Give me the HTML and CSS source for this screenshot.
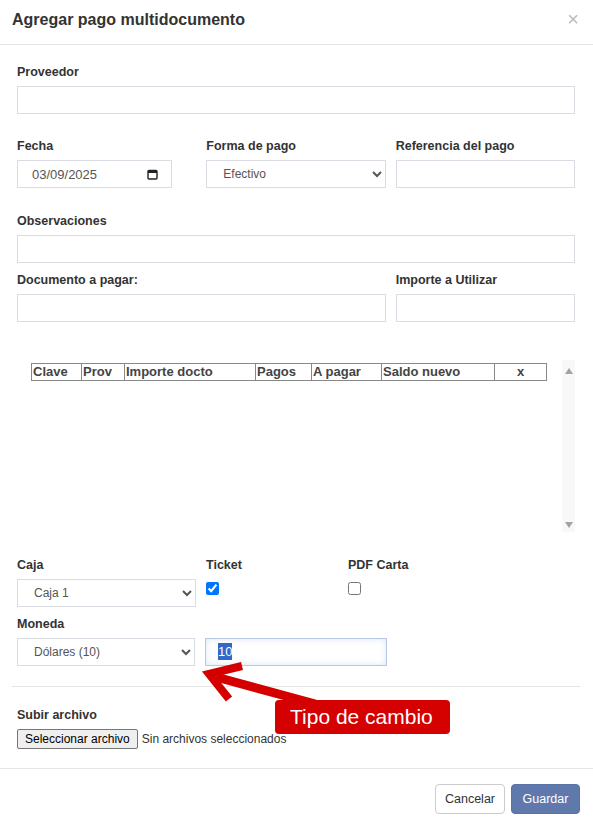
FILE: index.html
```html
<!DOCTYPE html>
<html lang="es">
<head>
    <meta charset="UTF-8">
    <meta name="viewport" content="width=device-width, initial-scale=1.0">
    <title>Agregar pago multidocumento</title>
    <link rel="stylesheet" href="styles.css">
</head>
<body>
    <div class="modal">
        <div class="modal-header">
            <h4>Agregar pago multidocumento</h4>
            <span class="cerrar">&times;</span>
        </div>

        <div class="modal-body">
            <div class="campo">
                <label>Proveedor</label>
                <input type="text" class="control">
            </div>

            <div class="fila fila-fecha">
                <div class="campo">
                    <label>Fecha</label>
                    <div class="fecha">
                        <input type="text" class="control" value="03/09/2025">
                        <svg class="icono-cal" width="11" height="11" viewBox="0 0 11 11">
                            <rect x="1" y="1.5" width="9" height="8.5" rx="1" fill="none" stroke="#222" stroke-width="1.4"/>
                            <rect x="1" y="1.5" width="9" height="2.5" fill="#222"/>
                        </svg>
                    </div>
                </div>
                <div class="campo">
                    <label>Forma de pago</label>
                    <select class="control">
                        <option>Efectivo</option>
                    </select>
                </div>
                <div class="campo">
                    <label>Referencia del pago</label>
                    <input type="text" class="control">
                </div>
            </div>

            <div class="campo obs">
                <label>Observaciones</label>
                <input type="text" class="control">
            </div>

            <div class="fila fila-doc">
                <div class="campo doble">
                    <label>Documento a pagar:</label>
                    <input type="text" class="control">
                </div>
                <div class="campo">
                    <label>Importe a Utilizar</label>
                    <input type="text" class="control">
                </div>
            </div>

            <div class="tabla-wrap">
                <div class="tabla-scroll">
                    <table class="tabla">
                        <thead>
                            <tr>
                                <th class="c-clave">Clave</th>
                                <th class="c-prov">Prov</th>
                                <th class="c-importe">Importe docto</th>
                                <th class="c-pagos">Pagos</th>
                                <th class="c-apagar">A pagar</th>
                                <th class="c-saldo">Saldo nuevo</th>
                                <th class="c-x">x</th>
                            </tr>
                        </thead>
                    </table>
                </div>
                <div class="scrollbar">
                    <span class="flecha arriba"></span>
                    <span class="flecha abajo"></span>
                </div>
            </div>

            <div class="fila fila-caja">
                <div class="campo">
                    <label>Caja</label>
                    <select class="control">
                        <option>Caja 1</option>
                    </select>
                </div>
                <div class="campo">
                    <label>Ticket</label>
                    <input type="checkbox" class="check" checked>
                </div>
                <div class="campo">
                    <label>PDF Carta</label>
                    <input type="checkbox" class="check">
                </div>
            </div>

            <div class="fila fila-moneda">
                <div class="campo">
                    <label>Moneda</label>
                    <select class="control">
                        <option>Dólares (10)</option>
                    </select>
                </div>
                <div class="campo">
                    <label>&nbsp;</label>
                    <div class="control enfocado"><span class="seleccion">10</span></div>
                </div>
            </div>

            <hr class="separador">

            <div class="campo archivo">
                <label>Subir archivo</label>
                <div class="archivo-linea">
                    <button type="button" class="btn-archivo">Seleccionar archivo</button>
                    <span>Sin archivos seleccionados</span>
                </div>
            </div>
        </div>

        <div class="modal-footer">
            <button type="button" class="btn btn-cancelar">Cancelar</button>
            <button type="button" class="btn btn-guardar">Guardar</button>
        </div>
    </div>

    <!-- anotación en rojo -->
    <svg class="flecha-roja" width="593" height="826" viewBox="0 0 593 826">
        <line x1="216" y1="677" x2="330" y2="708" stroke="#d40000" stroke-width="9"/>
        <polyline points="242,666 209,674 229,699" fill="none" stroke="#d40000" stroke-width="8" stroke-linejoin="miter"/>
    </svg>
    <div class="nota">Tipo de cambio</div>
</body>
</html>
```

FILE: styles.css
```css
* {
    box-sizing: border-box;
}
body {
    margin: 0;
    background: #fff;
    font-family: 'Liberation Sans', Arial, sans-serif;
    color: #333;
    font-size: 12px;
}
.modal {
    width: 593px;
    min-height: 826px;
}
.modal-header {
    height: 45px;
    padding: 0 12px;
    border-bottom: 1px solid #e5e5e5;
    display: flex;
    align-items: center;
    justify-content: space-between;
}
.modal-header h4 {
    margin: 0 0 5px;
    font-size: 16px;
    font-weight: bold;
    color: #333;
}
.cerrar {
    font-size: 20px;
    color: #bbb;
    margin: 0 2px 6px 0;
}
.modal-body {
    padding: 18px 18px 19px 17px;
}
label {
    display: block;
    font-weight: bold;
    font-size: 12.5px;
    line-height: 18px;
    margin-bottom: 5px;
    color: #333;
}
.control {
    display: block;
    width: 100%;
    height: 28px;
    border: 1px solid #d9dde3;
    border-radius: 0;
    background: #fff;
    padding: 0 15px;
    font-family: 'Liberation Sans', Arial, sans-serif;
    font-size: 12px;
    color: #555;
}
select.control {
    padding: 0 10px 0 12px;
}
.fila {
    display: grid;
    grid-template-columns: repeat(3, 1fr);
    column-gap: 10px;
}
.fila-fecha { margin-top: 23px; }
.obs { margin-top: 24px; }
.fila-doc { margin-top: 8px; }
.doble { grid-column: span 2; }

.fecha {
    position: relative;
    width: 155px;
}
.fecha .control {
    padding-left: 14px;
    font-size: 13px;
}
.icono-cal {
    position: absolute;
    right: 14px;
    top: 9px;
}

.tabla-wrap {
    margin-top: 38px;
    height: 172px;
    display: flex;
}
.tabla-scroll {
    flex: 1;
    padding: 3px 15px 0 14px;
}
.tabla {
    border-collapse: collapse;
    width: 515px;
    table-layout: fixed;
}
.tabla th {
    border: 1px solid #888;
    height: 17px;
    padding: 0 1px;
    font-size: 13px;
    line-height: 14px;
    font-weight: bold;
    color: #444;
    text-align: left;
}
.c-clave { width: 50px; }
.c-prov { width: 43px; }
.c-importe { width: 131px; }
.c-pagos { width: 56px; }
.c-apagar { width: 70px; }
.c-saldo { width: 113px; }
.tabla th.c-x { width: 52px; text-align: center; }

.scrollbar {
    width: 13px;
    background: #f8f8f8;
    display: flex;
    flex-direction: column;
    justify-content: space-between;
    align-items: center;
    padding: 8px 0 4px;
}
.flecha {
    width: 0;
    height: 0;
    border-left: 4px solid transparent;
    border-right: 4px solid transparent;
}
.arriba { border-bottom: 6px solid #a3a3a3; }
.abajo { border-top: 6px solid #a3a3a3; }

.fila-caja {
    margin-top: 24px;
    grid-template-columns: 179px 132px 1fr;
}
.check {
    margin: 3px 0 0;
    width: 13px;
    height: 13px;
}
.fila-moneda { margin-top: 8px; }
.enfocado {
    width: 182px;
    border-color: #b7c9e6;
    box-shadow: inset 0 0 6px rgba(102, 160, 233, 0.25);
    padding: 0 12px;
    line-height: 26px;
    font-size: 13px;
}
.seleccion {
    background: #3367c9;
    color: #fff;
    padding: 1px 0;
}

.separador {
    margin: 20px -5px 0;
    border: 0;
    border-top: 1px solid #e5e5e5;
}
.archivo { margin-top: 19px; }
.archivo-linea {
    display: flex;
    align-items: center;
    gap: 4px;
    color: #333;
}
.btn-archivo {
    height: 20px;
    padding: 0 7px;
    font-family: 'Liberation Sans', Arial, sans-serif;
    font-size: 12px;
    color: #000;
    background: #efefef;
    border: 1px solid #767676;
    border-radius: 2px;
}

.modal-footer {
    border-top: 1px solid #e5e5e5;
    padding: 15px 13px;
    display: flex;
    justify-content: flex-end;
    gap: 6px;
}
.btn {
    height: 30px;
    width: 70px;
    padding: 0;
    font-family: 'Liberation Sans', Arial, sans-serif;
    font-size: 12.5px;
    border-radius: 4px;
    border: 1px solid #ccc;
}
.btn-cancelar {
    background: #fff;
    color: #333;
}
.btn-guardar {
    width: 69px;
    background: #6079ad;
    border-color: #5a72a5;
    color: #fff;
}

.flecha-roja {
    position: absolute;
    left: 0;
    top: 0;
    pointer-events: none;
}
.nota {
    position: absolute;
    left: 275px;
    top: 700px;
    width: 175px;
    height: 34px;
    background: #d50000;
    border-radius: 4px;
    color: #fff;
    font-family: 'Liberation Sans', Arial, sans-serif;
    font-size: 21px;
    line-height: 34px;
    padding-left: 15px;
}
```
